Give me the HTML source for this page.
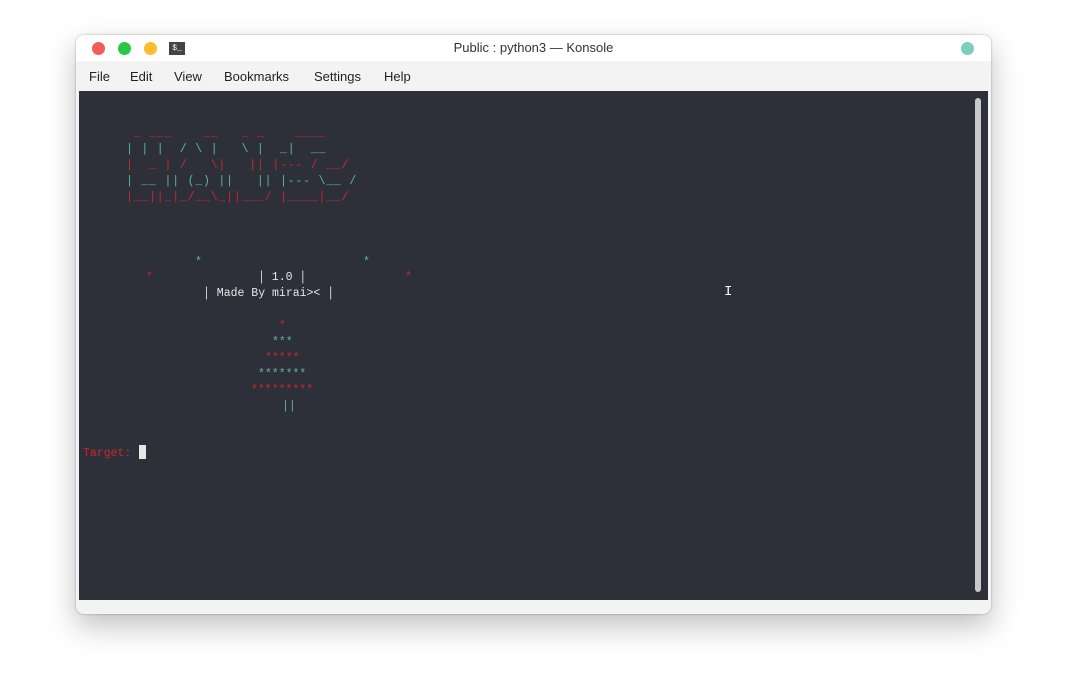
<!DOCTYPE html>
<html><head><style>
body{margin:0;width:1067px;height:700px;background:#fff;position:relative;overflow:hidden;font-family:"Liberation Sans",sans-serif}
.win{position:absolute;left:76px;top:35px;width:915px;height:579px;background:#f3f3f4;border-radius:8px;box-shadow:0 12px 30px rgba(0,0,0,.25),0 0 2px rgba(0,0,0,.3);overflow:hidden}
.tb{position:absolute;left:0;top:0;width:100%;height:26px;background:#fff}
.dot{position:absolute;top:7px;width:13px;height:13px;border-radius:50%}
.title{position:absolute;top:5px;width:100%;text-align:center;font-size:13px;color:#333}
.menu{position:absolute;top:34px;font-size:13px;color:#222}
.term{position:absolute;left:3px;top:56px;width:909px;height:509px;background:#2e3039}
.t{position:absolute;font-family:"Liberation Mono","DejaVu Sans Mono",monospace;font-size:11.5px;line-height:16px;white-space:pre}
.a{letter-spacing:0.8px}
.r{color:#c9262d}.g{color:#5fb3a7}.w{color:#e6e6e6}
</style></head><body>
<div class="win">
<div class="tb">
<div class="dot" style="left:16px;background:#f25d56"></div>
<div class="dot" style="left:42px;background:#28c840"></div>
<div class="dot" style="left:68px;background:#fdbc2e"></div>
<div style="position:absolute;left:93px;top:7px;width:16px;height:13px;background:#444;color:#fff;font-size:8px;line-height:13px;font-family:'Liberation Mono',monospace;text-align:center">$_</div>
<div class="title">Public : python3 — Konsole</div>
<div class="dot" style="left:885px;background:#7dcdc0"></div>
</div>
<div class="menu" style="left:13px">File</div>
<div class="menu" style="left:54px">Edit</div>
<div class="menu" style="left:98px">View</div>
<div class="menu" style="left:148px">Bookmarks</div>
<div class="menu" style="left:238px">Settings</div>
<div class="menu" style="left:308px">Help</div>
<div class="term">
<div style="position:absolute;left:896px;top:7px;width:6px;height:494px;background:#c8c8ca;border-radius:3px"></div>
</div>
</div>
<div class="t a r" style="left:126px;top:126px"> _ ___    __   _ _    ____</div>
<div class="t a g" style="left:126px;top:142px">| | |  / \ |   \ |  _|  __</div>
<div class="t a r" style="left:126px;top:158px">|  _ | /   \|   || |--- / __/</div>
<div class="t a g" style="left:126px;top:174px">| __ || (_) ||   || |--- \__ /</div>
<div class="t a r" style="left:126px;top:190px">|__||_|_/__\_||___/ |____|__/</div>
<div class="t g" style="left:195px;top:255px">*</div>
<div class="t g" style="left:363px;top:255px">*</div>
<div class="t r" style="left:146px;top:270px">*</div>
<div class="t r" style="left:405px;top:270px">*</div>
<div class="t w" style="left:258px;top:270px">│ 1.0 │</div>
<div class="t w" style="left:203px;top:286px">│ Made By mirai&gt;&lt; │</div>
<div class="t r" style="left:279px;top:319px">*</div>
<div class="t g" style="left:272px;top:335px">***</div>
<div class="t r" style="left:265px;top:351px">*****</div>
<div class="t g" style="left:258px;top:367px">*******</div>
<div class="t r" style="left:251px;top:383px">*********</div>
<div class="t g" style="left:282px;top:399px">||</div>
<div class="t r" style="left:83px;top:446px">Target:</div>
<div style="position:absolute;left:139px;top:445px;width:7px;height:14px;background:#e6e6e6"></div>
<div style="position:absolute;left:724px;top:284px;font-family:'Liberation Mono',monospace;font-size:14px;color:#fff">I</div>
</body></html>
